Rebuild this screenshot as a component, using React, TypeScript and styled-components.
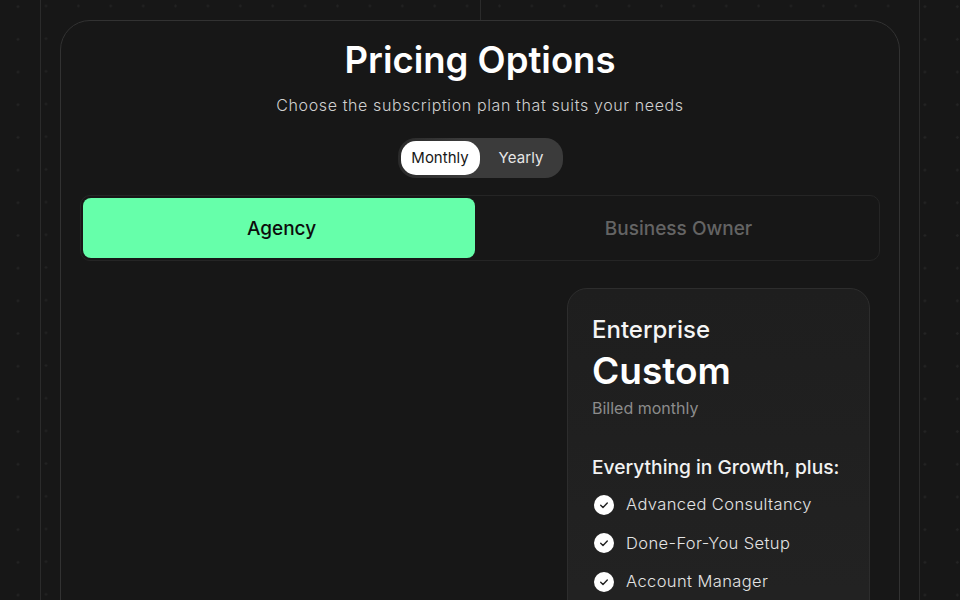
import React from "react";
import styled, { createGlobalStyle } from "styled-components";

const Global = createGlobalStyle`
  html, body { margin: 0; padding: 0; height: 600px; overflow: hidden; background: #171717; }
  body { font-family: Inter, "Noto Sans", sans-serif; color: #fff; }
  * { box-sizing: border-box; }
`;

const Page = styled.div`
  position: relative;
  width: 960px;
  height: 600px;
  overflow: hidden;
  padding: 0 40px;
  background-color: #171717;
  background-image: radial-gradient(circle at center, #242424 0, #242424 1px, transparent 1.5px);
  background-size: 32.4px 32.7px;
  background-position: 1.8px 23px;
`;

const Frame = styled.div`
  position: relative;
  height: 1000px;
  padding: 20px 19px 0 19px;
  background-color: #171717;
  background-image: radial-gradient(circle at center, #222 0, #222 1px, transparent 1.5px);
  background-size: 32.4px 32.7px;
  background-position: -11.2px -10.4px;
  border-left: 1px solid #2b2b2b;
  border-right: 1px solid #2b2b2b;
  &::before {
    content: "";
    position: absolute;
    left: 439px;
    top: 0;
    width: 1px;
    height: 20px;
    background: #2b2b2b;
  }
`;

const Shell = styled.main`
  height: 900px;
  padding: 0 19px;
  background: #171717;
  border: 1px solid #323232;
  border-radius: 30px;
`;

const Header = styled.header`
  display: flex;
  flex-direction: column;
  align-items: center;
`;

const Title = styled.h1`
  margin: 15px 0 0;
  font-size: 36.5px;
  line-height: 48px;
  font-weight: 600;
  color: #fff;
`;

const Subtitle = styled.p`
  margin: 11px 0 0;
  font-size: 16px;
  line-height: 20px;
  font-weight: 300;
  letter-spacing: 0.62px;
  color: #d0d0d0;
`;

const Toggle = styled.div`
  display: flex;
  align-items: center;
  width: 165px;
  height: 40px;
  margin-top: 23px;
  padding: 3px;
  border-radius: 18px;
  background: linear-gradient(90deg, #2a2a2a, #3b3b3b 40%, #3b3b3b);
`;

const ToggleOption = styled.button<{ $active?: boolean }>`
  width: ${(p) => (p.$active ? "79.5px" : "80.5px")};
  height: 34px;
  padding: 0 0 2px ${(p) => (p.$active ? "0" : "3px")};
  border: 0;
  border-radius: 15px;
  font: 400 15px Inter, sans-serif;
  letter-spacing: ${(p) => (p.$active ? "0" : "0.1px")};
  color: ${(p) => (p.$active ? "#171717" : "#e6e6e6")};
  background: ${(p) => (p.$active ? "#fff" : "transparent")};
`;

const Tabs = styled.div`
  display: flex;
  height: 66px;
  margin-top: 17px;
  padding: 2px;
  border: 1px solid #252525;
  border-radius: 10px;
`;

const Tab = styled.button<{ $active?: boolean }>`
  flex: ${(p) => (p.$active ? "0 0 392px" : "1")};
  padding: 0 0 0 5px;
  border: 0;
  border-radius: 8px;
  font: 500 19px Inter, sans-serif;
  color: ${(p) => (p.$active ? "#0c0c0c" : "#646464")};
  background: ${(p) => (p.$active ? "#66ffaa" : "transparent")};
`;

const Plans = styled.section`
  display: flex;
  justify-content: flex-end;
  margin-top: 27px;
  padding-right: 10px;
`;

const PlanCard = styled.article`
  width: 303px;
  height: 500px;
  padding: 26px 24px;
  background: linear-gradient(180deg, #1e1e1e, #222 60%);
  border: 1px solid #2d2d2d;
  border-radius: 20px;
`;

const PlanName = styled.h2`
  margin: 0;
  font-size: 24px;
  line-height: 30px;
  font-weight: 500;
  color: #f5f5f5;
`;

const Price = styled.div`
  margin-top: 3px;
  font-size: 37px;
  line-height: 46px;
  font-weight: 600;
  color: #fff;
`;

const Billing = styled.div`
  margin-top: 4px;
  font-size: 16px;
  line-height: 20px;
  color: #8c8c8c;
`;

const FeatureHeading = styled.h3`
  margin: 37px 0 0;
  font-size: 19.2px;
  line-height: 24px;
  font-weight: 500;
  color: #f2f2f2;
`;

const FeatureList = styled.ul`
  list-style: none;
  margin: 13px 0 0;
  padding: 0 0 0 1px;
  display: flex;
  flex-direction: column;
  gap: 14.5px;
`;

const Feature = styled.li`
  display: flex;
  align-items: center;
  gap: 12px;
  height: 24px;
  font-size: 16.5px;
  font-weight: 300;
  letter-spacing: 0.4px;
  color: #e4e4e4;
`;

const CheckIcon = () => (
  <svg width="21" height="21" viewBox="0 0 21 21" aria-hidden="true">
    <circle cx="11" cy="11" r="10" fill="#fff" />
    <path d="M7.7 11.2l2.3 2.3 4.3-4.6" fill="none" stroke="#222" strokeWidth="1.4" strokeLinecap="round" strokeLinejoin="round" />
  </svg>
);

export default function App() {
  return (
    <Page>
      <Global />
      <Frame>
        <Shell>
          <Header>
            <Title>Pricing Options</Title>
            <Subtitle>Choose the subscription plan that suits your needs</Subtitle>
            <Toggle>
              <ToggleOption $active>Monthly</ToggleOption>
              <ToggleOption>Yearly</ToggleOption>
            </Toggle>
          </Header>
          <Tabs>
            <Tab $active>Agency</Tab>
            <Tab>Business Owner</Tab>
          </Tabs>
          <Plans>
            <PlanCard>
              <PlanName>Enterprise</PlanName>
              <Price>Custom</Price>
              <Billing>Billed monthly</Billing>
              <FeatureHeading>Everything in Growth, plus:</FeatureHeading>
              <FeatureList>
                {["Advanced Consultancy", "Done-For-You Setup", "Account Manager"].map((f) => (
                  <Feature key={f}>
                    <CheckIcon />
                    {f}
                  </Feature>
                ))}
              </FeatureList>
            </PlanCard>
          </Plans>
        </Shell>
      </Frame>
    </Page>
  );
}
